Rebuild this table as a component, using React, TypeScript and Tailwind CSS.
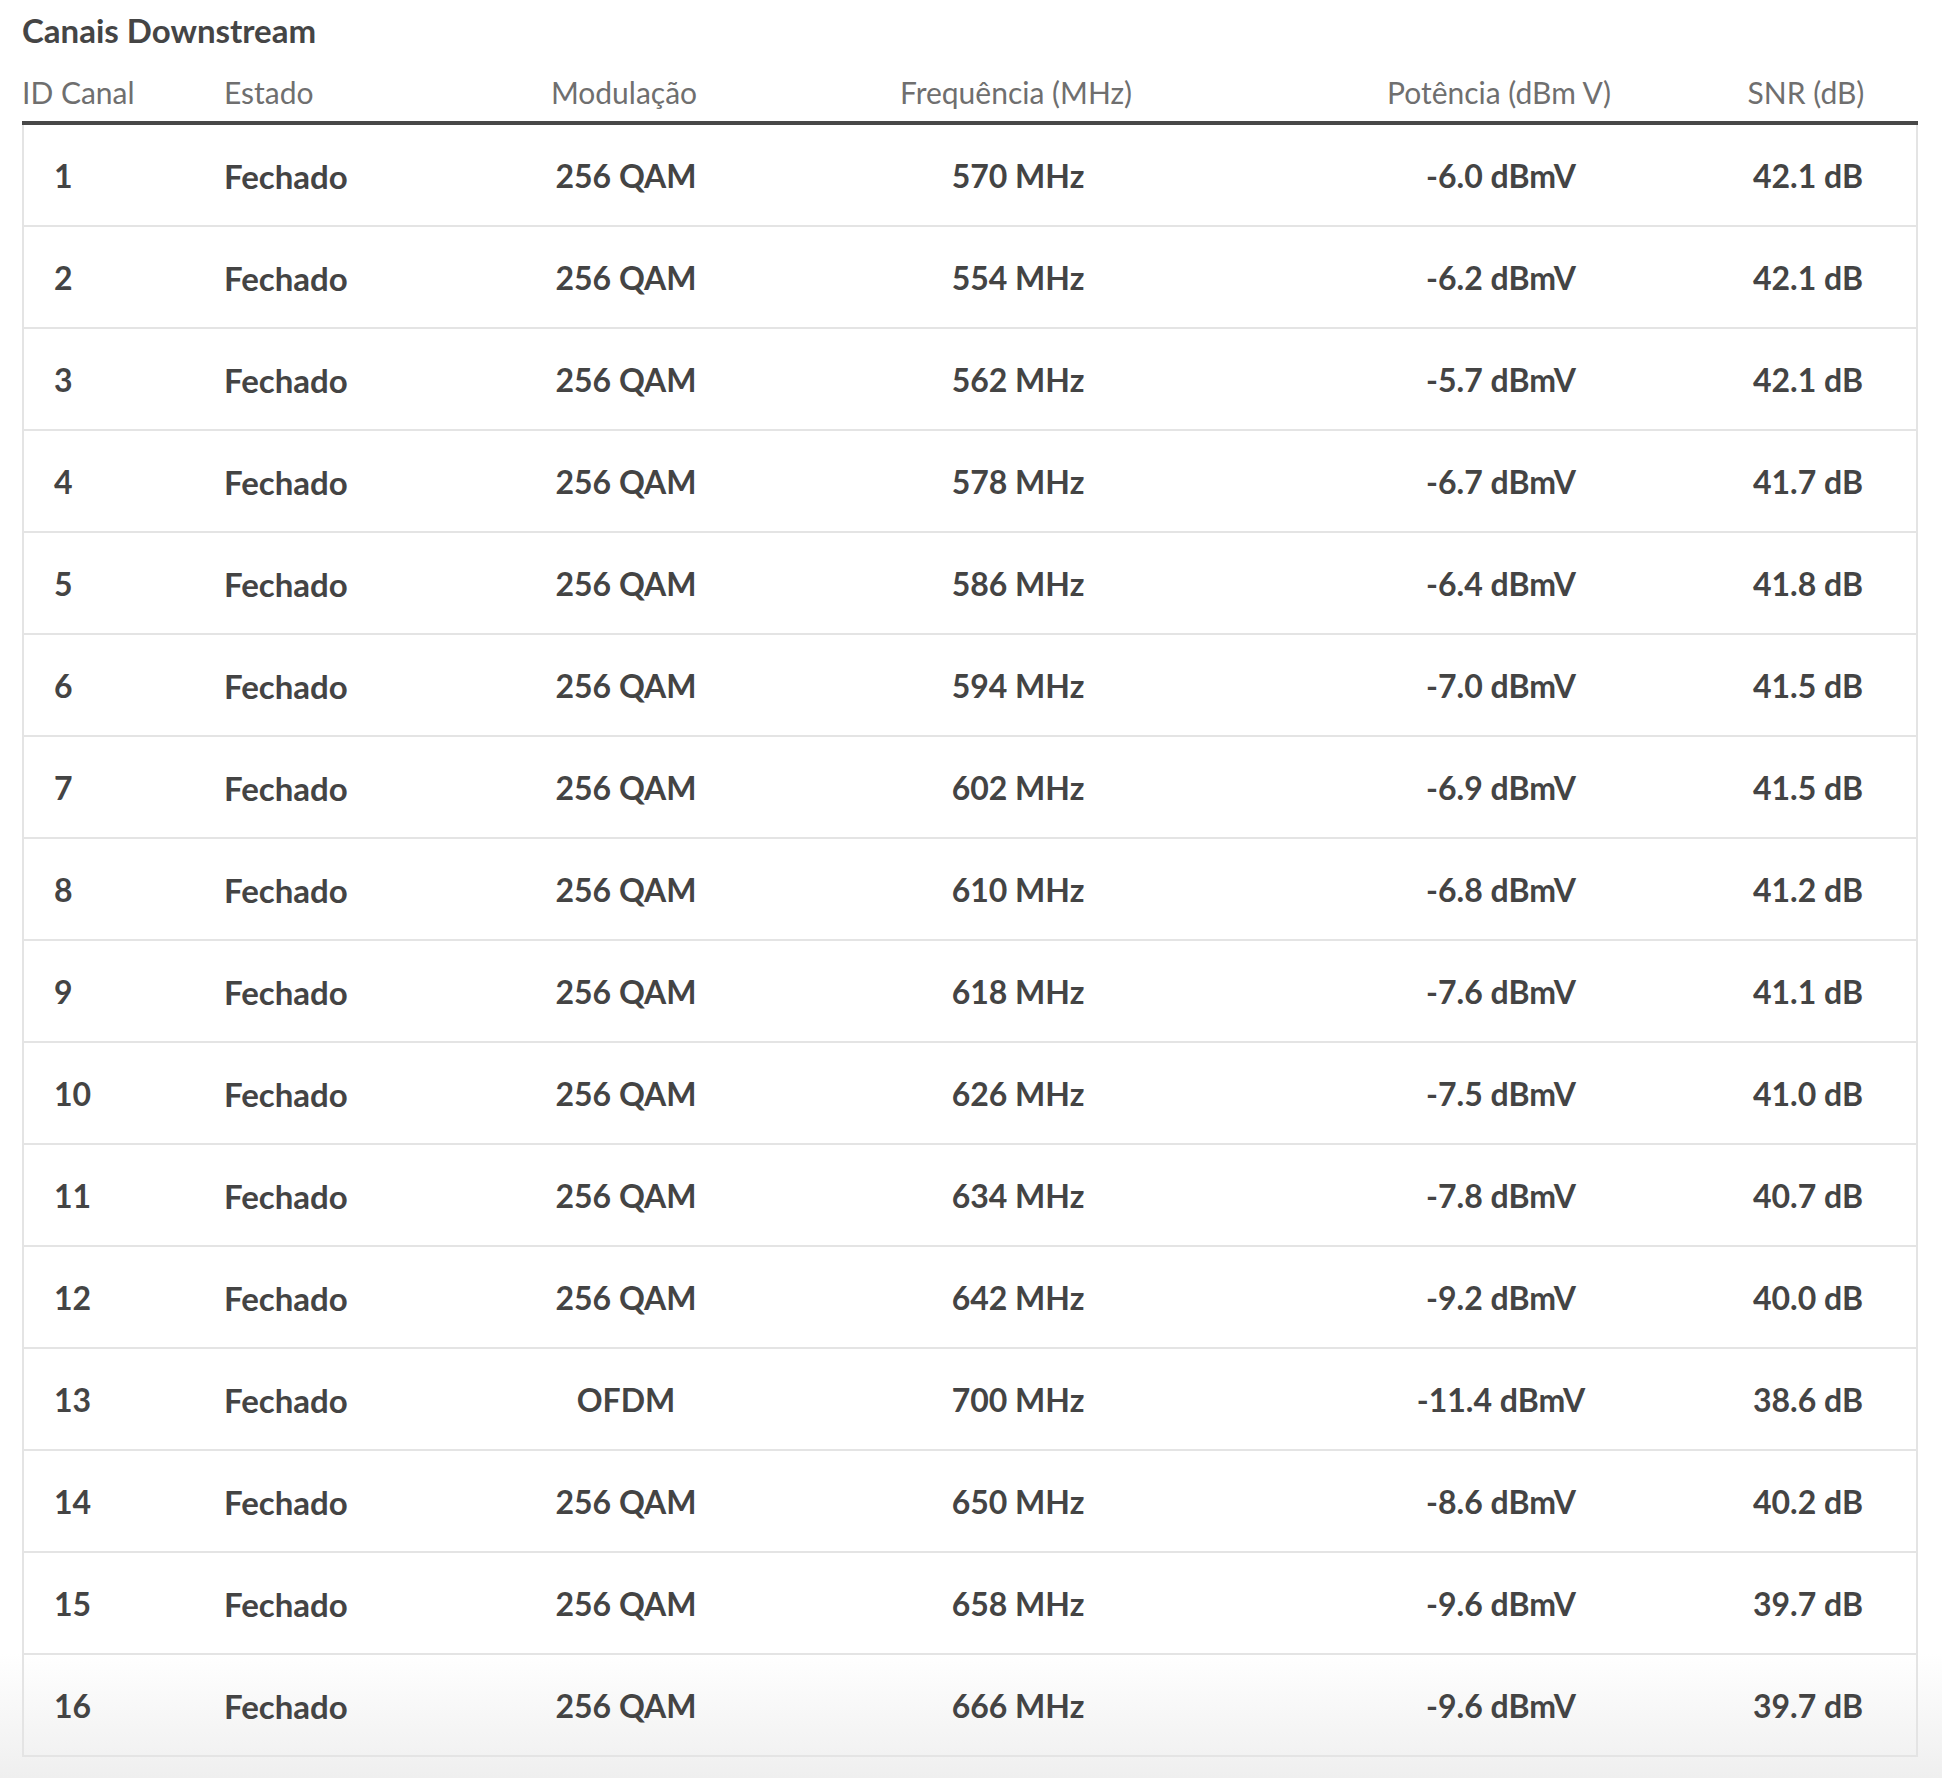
import React from 'react'

const rows = [
  ['1', '256 QAM', '570 MHz', '-6.0 dBmV', '42.1 dB'],
  ['2', '256 QAM', '554 MHz', '-6.2 dBmV', '42.1 dB'],
  ['3', '256 QAM', '562 MHz', '-5.7 dBmV', '42.1 dB'],
  ['4', '256 QAM', '578 MHz', '-6.7 dBmV', '41.7 dB'],
  ['5', '256 QAM', '586 MHz', '-6.4 dBmV', '41.8 dB'],
  ['6', '256 QAM', '594 MHz', '-7.0 dBmV', '41.5 dB'],
  ['7', '256 QAM', '602 MHz', '-6.9 dBmV', '41.5 dB'],
  ['8', '256 QAM', '610 MHz', '-6.8 dBmV', '41.2 dB'],
  ['9', '256 QAM', '618 MHz', '-7.6 dBmV', '41.1 dB'],
  ['10', '256 QAM', '626 MHz', '-7.5 dBmV', '41.0 dB'],
  ['11', '256 QAM', '634 MHz', '-7.8 dBmV', '40.7 dB'],
  ['12', '256 QAM', '642 MHz', '-9.2 dBmV', '40.0 dB'],
  ['13', 'OFDM', '700 MHz', '-11.4 dBmV', '38.6 dB'],
  ['14', '256 QAM', '650 MHz', '-8.6 dBmV', '40.2 dB'],
  ['15', '256 QAM', '658 MHz', '-9.6 dBmV', '39.7 dB'],
  ['16', '256 QAM', '666 MHz', '-9.6 dBmV', '39.7 dB'],
]

const cols = 'grid grid-cols-[202px_268px_264px_520px_446px_168px]'

export default function App() {
  return (
    <div className="min-h-[1778px] w-full bg-linear-to-b from-white from-[93%] to-[#efefef] px-[22px] pr-[24px] font-['Lato',sans-serif] text-[#444]">
      <h2 className="h-[63px] pt-[8px] text-[33px] font-bold leading-[44px] text-[#454545]">Canais Downstream</h2>

      <div className={cols + ' h-[62px] items-center border-b-4 border-[#484848] text-[30px] leading-none text-[#6f6f6f]'}>
        <div>ID Canal</div>
        <div>Estado</div>
        <div className="text-center">Modulação</div>
        <div className="text-center">Frequência (MHz)</div>
        <div className="text-center">Potência (dBm V)</div>
        <div className="text-center">SNR (dB)</div>
      </div>

      <div className="border-x-2 border-[#e4e4e4]">
        {rows.map((r) => (
          <div
            key={r[0]}
            className={cols + ' h-[102px] items-center border-b-2 border-[#e4e4e4] pt-[2px] text-[32px] font-bold leading-none'}
          >
            <div className="pl-[30px]">{r[0]}</div>
            <div className="-ml-[2px] text-[33px]">Fechado</div>
            <div className="text-center">{r[1]}</div>
            <div className="text-center">{r[2]}</div>
            <div className="text-center">{r[3]}</div>
            <div className="text-center">{r[4]}</div>
          </div>
        ))}
      </div>
    </div>
  )
}
